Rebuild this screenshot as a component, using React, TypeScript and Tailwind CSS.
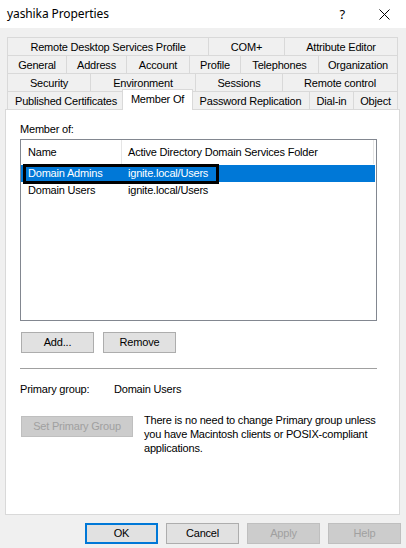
import React from "react";

const ui = "font-['Liberation_Sans',Arial,sans-serif] text-[11px] tracking-[-0.2px] text-black";

type Tab = { label: string; w: number; active?: boolean };

const rows: Tab[][] = [
  [
    { label: "Remote Desktop Services Profile", w: 201 },
    { label: "COM+", w: 76 },
    { label: "Attribute Editor", w: 114 },
  ],
  [
    { label: "General", w: 59 },
    { label: "Address", w: 60 },
    { label: "Account", w: 63 },
    { label: "Profile", w: 51 },
    { label: "Telephones", w: 78 },
    { label: "Organization", w: 80 },
  ],
  [
    { label: "Security", w: 83 },
    { label: "Environment", w: 105 },
    { label: "Sessions", w: 87 },
    { label: "Remote control", w: 116 },
  ],
  [
    { label: "Published Certificates", w: 117 },
    { label: "Member Of", w: 67, active: true },
    { label: "Password Replication", w: 118 },
    { label: "Dial-in", w: 44 },
    { label: "Object", w: 45 },
  ],
];

function TabRow({ tabs }: { tabs: Tab[] }) {
  return (
    <div className="ml-[7px] flex h-[18px] w-[391px]">
      {tabs.map((t, i) =>
        t.active ? (
          <div
            key={t.label}
            style={{ width: t.w + 4 }}
            className="relative z-10 -mx-[2px] -mt-[2px] flex h-[21px] shrink-0 justify-center border-x border-t border-[#d9d9d9] bg-white pt-[3px] leading-[13px]"
          >
            {t.label}
          </div>
        ) : (
          <div
            key={t.label}
            style={{ width: t.w }}
            className={
              "flex h-[18px] shrink-0 items-center justify-center border-l border-t border-[#d9d9d9] bg-[#f0f0f0] pt-px leading-[13px]" +
              (i === tabs.length - 1 ? " border-r" : "")
            }
          >
            {t.label}
          </div>
        ),
      )}
    </div>
  );
}

function Button({
  children,
  w = 73,
  disabled,
  primary,
}: {
  children: React.ReactNode;
  w?: number;
  disabled?: boolean;
  primary?: boolean;
}) {
  let cls = "flex h-[21px] shrink-0 items-center justify-center leading-[13px] ";
  if (disabled) cls += "border border-[#bfbfbf] bg-[#cccccc] text-[#a0a0a0]";
  else if (primary) cls += "border-2 border-[#0078d7] bg-[#e1e1e1]";
  else cls += "border border-[#adadad] bg-[#e1e1e1]";
  return (
    <div style={{ width: w }} className={cls}>
      {children}
    </div>
  );
}

export default function App() {
  return (
    <div className={"flex h-[548px] w-[406px] flex-col overflow-hidden bg-[#f0f0f0] " + ui}>
      {/* title bar */}
      <div className="flex h-[28px] shrink-0 items-center bg-white">
        <span className="ml-[7px] font-['Noto_Sans',sans-serif] text-[12px] tracking-[-0.1px]">
          yashika Properties
        </span>
        <span className="ml-auto mr-[34px] font-['Noto_Sans',sans-serif] text-[13px] leading-none">?</span>
        <svg width="11" height="11" viewBox="0 0 11 11" className="mr-[16px]">
          <path d="M0.5 0.5 L10.5 10.5 M10.5 0.5 L0.5 10.5" stroke="#000" strokeWidth="1" />
        </svg>
      </div>

      {/* tabs */}
      <div className="mt-[9px] flex flex-col">
        {rows.map((r, i) => (
          <TabRow key={i} tabs={r} />
        ))}
      </div>

      {/* page */}
      <div className="ml-[5px] flex h-[406px] w-[395px] shrink-0 flex-col border border-[#d9d9d9] bg-white pl-[14px]">
        <div className="mt-[13px] leading-[13px]">Member of:</div>

        <div className="relative mt-[3px] h-[182px] w-[357px] border border-[#828790] bg-white">
          <div className="flex h-[24px]">
            <div className="flex w-[101px] items-center border-r border-[#e5e5e5] pl-[7px]">Name</div>
            <div className="flex w-[252px] items-center border-r border-[#e5e5e5] pl-[6px]">
              Active Directory Domain Services Folder
            </div>
          </div>
          <div className="mt-px flex h-[17px] w-[354px] items-center bg-[#0078d7] text-white">
            <div className="w-[101px] pl-[7px]">Domain Admins</div>
            <div className="pl-[6px]">ignite.local/Users</div>
          </div>
          <div className="flex h-[17px] items-center">
            <div className="w-[101px] pl-[7px]">Domain Users</div>
            <div className="pl-[6px]">ignite.local/Users</div>
          </div>
          {/* highlight rectangle */}
          <div className="absolute left-[2px] top-[24px] h-[20px] w-[196px] border-[3px] border-black" />
        </div>

        <div className="mt-[11px] ml-px flex gap-[9px]">
          <Button>Add...</Button>
          <Button>Remove</Button>
        </div>

        <div className="mt-[15px] h-px w-[357px] bg-[#a0a0a0]" />

        <div className="mt-[14px] flex leading-[13px]">
          <span className="w-[94px]">Primary group:</span>
          <span>Domain Users</span>
        </div>

        <div className="mt-[17px] flex">
          <div className="ml-px mt-[3px]">
            <Button w={112} disabled>
              Set Primary Group
            </Button>
          </div>
          <div className="ml-[11px] leading-[14px]">
            There is no need to change Primary group unless
            <br />
            you have Macintosh clients or POSIX-compliant
            <br />
            applications.
          </div>
        </div>
      </div>

      {/* dialog buttons */}
      <div className="mt-[8px] flex justify-end gap-[8px] pr-[5px]">
        <Button primary>OK</Button>
        <Button>Cancel</Button>
        <Button disabled>Apply</Button>
        <Button disabled>Help</Button>
      </div>
    </div>
  );
}
